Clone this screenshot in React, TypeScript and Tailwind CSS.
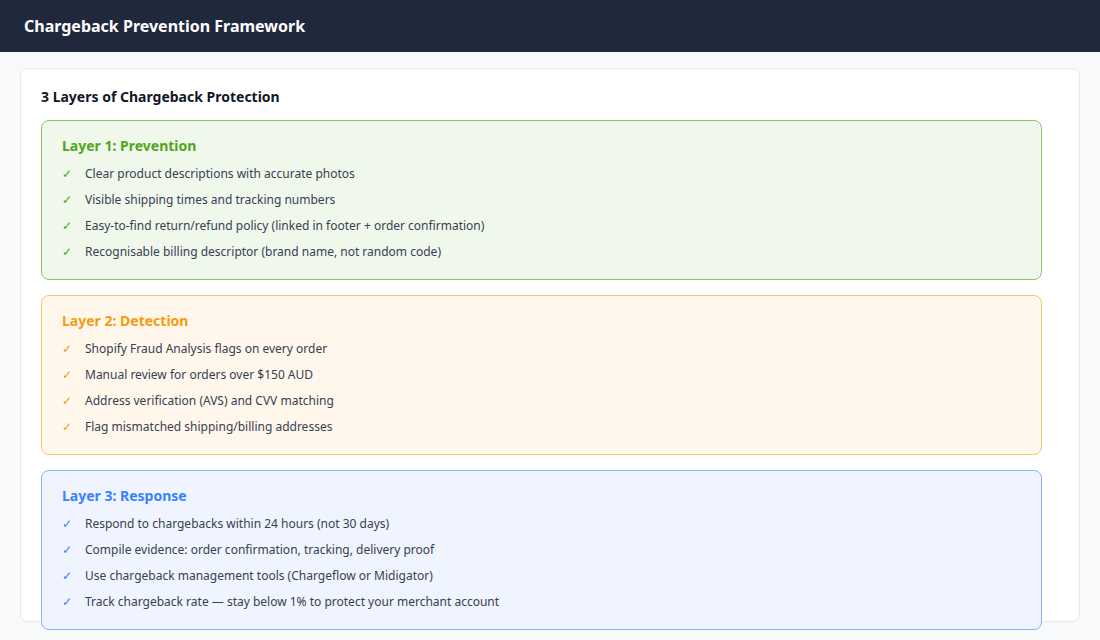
const layers = [
  {
    title: "Layer 1: Prevention",
    box: "border-[#8bc66a] bg-[#f0f8ec]",
    text: "text-[#52a520]",
    check: "text-[#52a520]",
    items: [
      "Clear product descriptions with accurate photos",
      "Visible shipping times and tracking numbers",
      "Easy-to-find return/refund policy (linked in footer + order confirmation)",
      "Recognisable billing descriptor (brand name, not random code)",
    ],
  },
  {
    title: "Layer 2: Detection",
    box: "border-[#f9c46b] bg-[#fff7eb]",
    text: "text-[#f39c12]",
    check: "text-[#f39c12]",
    items: [
      "Shopify Fraud Analysis flags on every order",
      "Manual review for orders over $150 AUD",
      "Address verification (AVS) and CVV matching",
      "Flag mismatched shipping/billing addresses",
    ],
  },
  {
    title: "Layer 3: Response",
    box: "border-[#8ab4f8] bg-[#eff4fe]",
    text: "text-[#3b82f6]",
    check: "text-[#3b82f6]",
    items: [
      "Respond to chargebacks within 24 hours (not 30 days)",
      "Compile evidence: order confirmation, tracking, delivery proof",
      "Use chargeback management tools (Chargeflow or Midigator)",
      "Track chargeback rate — stay below 1% to protect your merchant account",
    ],
  },
];

export default function App() {
  return (
    <div className="h-[640px] overflow-hidden bg-[#f8f9fb] font-['Liberation_Sans',Arial,sans-serif]">
      <header className="flex h-[52px] items-center bg-[#1f293b] px-6">
        <h1 className="text-[16px] font-bold text-white">Chargeback Prevention Framework</h1>
      </header>
      <div className="px-5 pt-4">
        <div className="h-[554px] rounded-lg border border-[#e5e9f0] bg-white px-5 pt-5">
          <h2 className="mb-[15px] text-[14px] font-bold leading-[16px] text-[#111827]">
            3 Layers of Chargeback Protection
          </h2>
          <div className="flex w-[1001px] flex-col gap-[15px]">
            {layers.map((l) => (
              <div key={l.title} className={`h-[160px] rounded-lg border px-5 pt-[17px] ${l.box}`}>
                <h3 className={`mb-[7px] text-[14px] font-bold leading-[16px] ${l.text}`}>{l.title}</h3>
                <ul>
                  {l.items.map((it) => (
                    <li key={it} className="flex h-[26px] items-center text-[12px] text-[#374151]">
                      <span className={`w-[23px] ${l.check}`}>✓</span>
                      {it}
                    </li>
                  ))}
                </ul>
              </div>
            ))}
          </div>
        </div>
      </div>
    </div>
  );
}
